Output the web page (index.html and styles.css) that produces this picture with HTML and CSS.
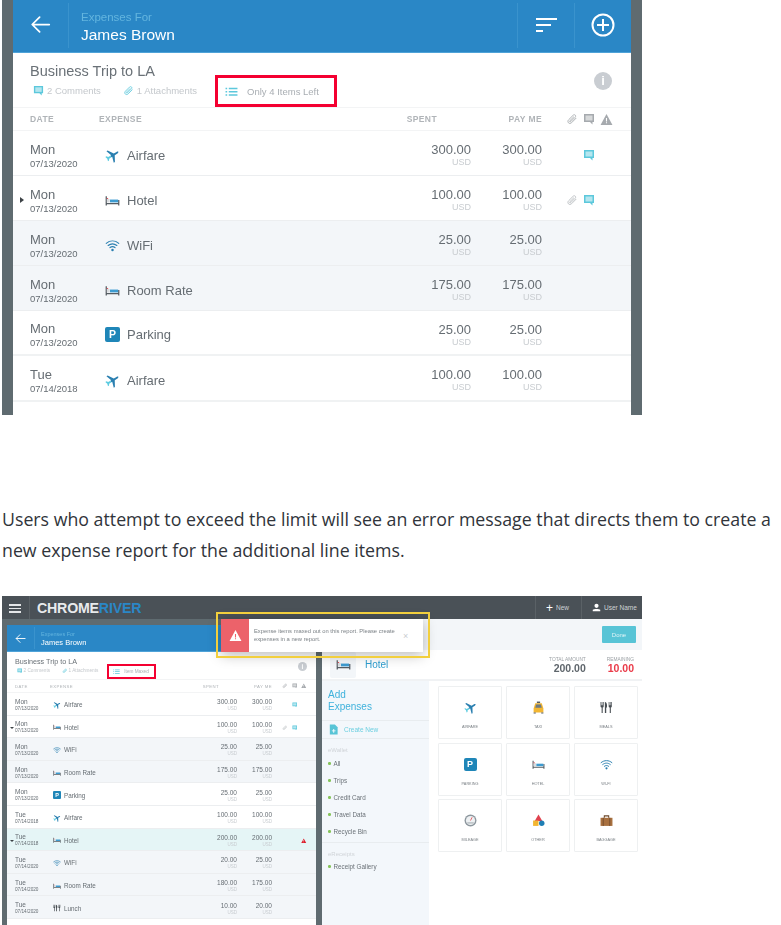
FILE: index.html
```html
<!DOCTYPE html>
<html lang="en">
<head>
  <meta charset="UTF-8">
  <title>Expense report limits</title>
  <link rel="stylesheet" href="styles.css">
</head>
<body>
  <svg class="defs" xmlns="http://www.w3.org/2000/svg">
    <symbol id="plane" viewBox="0 0 24 24">
      <g transform="rotate(58 12 12)">
        <path fill="#2a7fb0" d="M23 16.500v-2.200l-9.500-5.600V3.500C13.500 2.300 12.800 1 12 1s-1.500 1.300-1.500 2.500v5.200L1 14.300v2.200l9.500-3V15h3v-1.500z"/>
        <path fill="#5ccbe0" d="M10.500 15v4.200L8 21v2l4-1.200L16 23v-2l-2.500-1.800V15z"/>
      </g>
    </symbol>
    <symbol id="bed" viewBox="0 0 24 24">
      <path fill="#555c62" d="M1 5h2v15H1zM21 11h2v9h-2zM3 16h18v2H3z"/>
      <path fill="#3d9bd0" d="M8 10.500h13V15H8z"/>
      <path fill="#d9dde0" d="M3 9.500h4.500V15H3z"/>
      <path fill="#e0494f" d="M3 8h2v1.500H3z"/>
    </symbol>
    <symbol id="wifi" viewBox="0 0 24 24">
      <g fill="none" stroke="#2a7fb0" stroke-width="1.800" stroke-linecap="round">
        <path d="M2 8.500c6-5 14-5 20 0"/>
        <path d="M5 12c4.500-3.500 9.500-3.500 14 0"/>
        <path d="M8 15.300c2.700-2 5.300-2 8 0"/>
      </g>
      <circle cx="12" cy="19" r="2" fill="#2a7fb0"/>
    </symbol>
    <symbol id="comment" viewBox="0 0 24 24">
      <path fill="currentColor" d="M2 2h20v16h-3v5l-5-5H2z"/>
      <path fill="#fff" fill-opacity=".55" d="M5 5h14v10H5z"/>
    </symbol>
    <symbol id="clip" viewBox="0 0 24 24">
      <path fill="none" stroke="currentColor" stroke-width="1.800" stroke-linecap="round" d="M20 10.500l-8.700 8.800c-2 2-4.700 2-6.300.4s-1.600-4.300.4-6.300l8.800-8.800c1.300-1.300 3.200-1.400 4.300-.3s1 3-.3 4.300l-8.600 8.600c-.6.600-1.500.7-2 .2s-.4-1.400.2-2l7.500-7.500"/>
    </symbol>
    <symbol id="warn" viewBox="0 0 24 24">
      <path fill="currentColor" d="M12 2l11 20H1z"/>
      <path fill="#fff" d="M11 9h2v6.500h-2zM11 17h2v2h-2z"/>
    </symbol>
    <symbol id="warn-red" viewBox="0 0 24 24">
      <path fill="#fff" d="M12 2l11 20H1z"/>
      <path fill="#ec626a" d="M11 9h2v6.500h-2zM11 17h2v2h-2z"/>
    </symbol>
    <symbol id="list" viewBox="0 0 24 24">
      <path fill="currentColor" d="M1 5h3v3H1zM7 5h16v3H7zM1 11h3v3H1zM7 11h16v3H7zM1 17h3v3H1zM7 17h16v3H7z"/>
    </symbol>
    <symbol id="arrow" viewBox="0 0 24 24">
      <path fill="none" stroke="#fff" stroke-width="2" stroke-linecap="round" stroke-linejoin="round" d="M22 12H3M11 3.500L2.500 12l8.500 8.500"/>
    </symbol>
    <symbol id="cutlery" viewBox="0 0 24 24">
      <path fill="#484e53" d="M1 2h1.200v6h1V2h1.300v6h1V2h1.300v8c0 1-.7 1.700-1.800 2v10H3V12C1.800 11.700 1 11 1 10zM9 2c2.500 0 4 3 4 6.500S12 13 11.500 13v9H9zM16 2h1.200v6h1V2h1.300v6h1V2h1.300v8c0 1-.7 1.700-1.800 2v10H18V12c-1.200-.3-2-1-2-2z"/>
    </symbol>
    <symbol id="taxi" viewBox="0 0 24 24">
      <path fill="#555c62" d="M9 1h6v3H9z"/>
      <path fill="#f2b632" d="M6 4h12l3 10v7H3v-7z"/>
      <path fill="#6d7a82" d="M7.500 6.500h9l1.500 6H6z"/>
      <path fill="#555c62" d="M3 21h4v2H3zM17 21h4v2h-4z"/>
    </symbol>
    <symbol id="gauge" viewBox="0 0 24 24">
      <circle cx="12" cy="12" r="11" fill="#8d979e"/>
      <circle cx="12" cy="12" r="8.500" fill="#eef1f3"/>
      <path fill="none" stroke="#e0494f" stroke-width="1.500" d="M12 12l3-6"/>
      <path fill="none" stroke="#8d979e" stroke-width="1.500" d="M6 16.500h12"/>
    </symbol>
    <symbol id="shapes" viewBox="0 0 24 24">
      <path fill="#e0424e" d="M12 1l7 12H5z"/>
      <path fill="#f2b632" d="M2 12h10v10H2z"/>
      <circle cx="18" cy="17" r="5" fill="#1f7fb5"/>
    </symbol>
    <symbol id="bag" viewBox="0 0 24 24">
      <path fill="none" stroke="#6e4a2c" stroke-width="2" d="M8 7V3.500h8V7"/>
      <path fill="#a8703f" d="M1 7h22v15H1z"/>
      <path fill="#7d5230" d="M5 7h2v15H5zM17 7h2v15h-2z"/>
    </symbol>
    <symbol id="doc" viewBox="0 0 24 24">
      <path fill="#58c4d6" d="M4 1h11l6 6v16H4z"/>
      <path fill="#fff" d="M11.500 11h2v3h3v2h-3v3h-2v-3h-3v-2h3z"/>
    </symbol>
    <symbol id="user" viewBox="0 0 24 24">
      <circle cx="12" cy="7.500" r="5.500" fill="#fff"/>
      <path fill="#fff" d="M2 18c3-3 17-3 20 0v4H2z"/>
    </symbol>
  </svg>

  <section class="shot shot--top">
    <div class="report">
      <header class="report__bar">
        <div class="report__back"><svg class="report__arrow"><use href="#arrow"/></svg></div>
        <div class="report__who">
          <span class="report__for">Expenses For</span>
          <span class="report__name">James Brown</span>
        </div>
        <div class="report__tool">
          <span class="sort"><i class="sort__a"></i><i class="sort__b"></i><i class="sort__c"></i></span>
        </div>
        <div class="report__tool">
          <svg class="report__plus" viewBox="0 0 24 24"><circle cx="12" cy="12" r="10.500" fill="none" stroke="#fff" stroke-width="2"/><path stroke="#fff" stroke-width="2" d="M12 6v12M6 12h12"/></svg>
        </div>
      </header>

      <div class="report__info">
        <div class="report__titles">
          <h2 class="report__title">Business Trip to LA</h2>
          <div class="report__meta">
            <svg class="meta-icon"><use href="#comment"/></svg><span class="meta-text meta-text--comments">2 Comments</span>
            <svg class="meta-icon"><use href="#clip"/></svg><span class="meta-text">1 Attachments</span>
            <span class="callout"><svg class="callout__icon"><use href="#list"/></svg>Only 4 Items Left</span>
          </div>
        </div>
        <span class="info-dot">i</span>
      </div>

      <div class="row row--head">
        <div>DATE</div><div>EXPENSE</div><div class="right head-spent">SPENT</div><div class="right">PAY ME</div>
        <div class="flags"><svg class="flag flag--head"><use href="#clip"/></svg><svg class="flag flag--head"><use href="#comment"/></svg><svg class="flag flag--head flag--warn"><use href="#warn"/></svg></div>
      </div>

      <div class="row">
        <div class="when"><span class="when__day">Mon</span><span class="when__date">07/13/2020</span></div>
        <div class="what"><svg class="what__icon"><use href="#plane"/></svg>Airfare</div>
        <div class="amt"><span class="amt__val">300.00</span><span class="amt__cur">USD</span></div>
        <div class="amt"><span class="amt__val">300.00</span><span class="amt__cur">USD</span></div>
        <div class="flags flags--row"><span class="flag flag--empty"></span><svg class="flag flag--note"><use href="#comment"/></svg></div>
      </div>
      <div class="row row--open">
        <div class="when"><span class="when__day">Mon</span><span class="when__date">07/13/2020</span></div>
        <div class="what"><svg class="what__icon"><use href="#bed"/></svg>Hotel</div>
        <div class="amt"><span class="amt__val">100.00</span><span class="amt__cur">USD</span></div>
        <div class="amt"><span class="amt__val">100.00</span><span class="amt__cur">USD</span></div>
        <div class="flags flags--row"><svg class="flag flag--clip"><use href="#clip"/></svg><svg class="flag flag--note"><use href="#comment"/></svg></div>
      </div>
      <div class="row row--tint">
        <div class="when"><span class="when__day">Mon</span><span class="when__date">07/13/2020</span></div>
        <div class="what"><svg class="what__icon"><use href="#wifi"/></svg>WiFi</div>
        <div class="amt"><span class="amt__val">25.00</span><span class="amt__cur">USD</span></div>
        <div class="amt"><span class="amt__val">25.00</span><span class="amt__cur">USD</span></div>
      </div>
      <div class="row row--tint">
        <div class="when"><span class="when__day">Mon</span><span class="when__date">07/13/2020</span></div>
        <div class="what"><svg class="what__icon"><use href="#bed"/></svg>Room Rate</div>
        <div class="amt"><span class="amt__val">175.00</span><span class="amt__cur">USD</span></div>
        <div class="amt"><span class="amt__val">175.00</span><span class="amt__cur">USD</span></div>
      </div>
      <div class="row row--thick">
        <div class="when"><span class="when__day">Mon</span><span class="when__date">07/13/2020</span></div>
        <div class="what"><span class="parking">P</span>Parking</div>
        <div class="amt"><span class="amt__val">25.00</span><span class="amt__cur">USD</span></div>
        <div class="amt"><span class="amt__val">25.00</span><span class="amt__cur">USD</span></div>
      </div>
      <div class="row row--thick">
        <div class="when"><span class="when__day">Tue</span><span class="when__date">07/14/2018</span></div>
        <div class="what"><svg class="what__icon"><use href="#plane"/></svg>Airfare</div>
        <div class="amt"><span class="amt__val">100.00</span><span class="amt__cur">USD</span></div>
        <div class="amt"><span class="amt__val">100.00</span><span class="amt__cur">USD</span></div>
      </div>
    </div>
  </section>

  <p class="copy">Users who attempt to exceed the limit will see an error message that directs them to create a new expense report for the additional line items.</p>

  <section class="shot shot--app">
    <div class="topbar">
      <div class="topbar__menu"><i></i><i></i><i></i></div>
      <div class="logo">CHROME<span class="logo__river">RIVER</span></div>
      <div class="topbar__item topbar__item--new"><span class="topbar__plus">+</span>New</div>
      <div class="topbar__item topbar__item--user"><svg class="topbar__user"><use href="#user"/></svg>User Name</div>
    </div>

    <div class="app">
      <div class="report report--mini">
        <header class="report__bar">
          <div class="report__back"><svg class="report__arrow"><use href="#arrow"/></svg></div>
          <div class="report__who">
            <span class="report__for">Expenses For</span>
            <span class="report__name">James Brown</span>
          </div>
        </header>

        <div class="report__info">
          <div class="report__titles">
            <h2 class="report__title">Business Trip to LA</h2>
            <div class="report__meta">
              <svg class="meta-icon"><use href="#comment"/></svg><span class="meta-text meta-text--comments">2 Comments</span>
              <svg class="meta-icon"><use href="#clip"/></svg><span class="meta-text">1 Attachments</span>
              <span class="callout"><svg class="callout__icon"><use href="#list"/></svg>Item Maxed</span>
            </div>
          </div>
          <span class="info-dot">i</span>
        </div>

        <div class="row row--head">
          <div>DATE</div><div>EXPENSE</div><div class="right head-spent">SPENT</div><div class="right">PAY ME</div>
          <div class="flags"><svg class="flag flag--head"><use href="#clip"/></svg><svg class="flag flag--head"><use href="#comment"/></svg><svg class="flag flag--head flag--warn"><use href="#warn"/></svg></div>
        </div>

        <div class="row">
          <div class="when"><span class="when__day">Mon</span><span class="when__date">07/13/2020</span></div>
          <div class="what"><svg class="what__icon"><use href="#plane"/></svg>Airfare</div>
          <div class="amt"><span class="amt__val">300.00</span><span class="amt__cur">USD</span></div>
          <div class="amt"><span class="amt__val">300.00</span><span class="amt__cur">USD</span></div>
          <div class="flags flags--row"><span class="flag flag--empty"></span><svg class="flag flag--note"><use href="#comment"/></svg></div>
        </div>
        <div class="row row--down">
          <div class="when"><span class="when__day">Mon</span><span class="when__date">07/13/2020</span></div>
          <div class="what"><svg class="what__icon"><use href="#bed"/></svg>Hotel</div>
          <div class="amt"><span class="amt__val">100.00</span><span class="amt__cur">USD</span></div>
          <div class="amt"><span class="amt__val">100.00</span><span class="amt__cur">USD</span></div>
          <div class="flags flags--row"><svg class="flag flag--clip"><use href="#clip"/></svg><svg class="flag flag--note"><use href="#comment"/></svg></div>
        </div>
        <div class="row row--tint">
          <div class="when"><span class="when__day">Mon</span><span class="when__date">07/13/2020</span></div>
          <div class="what"><svg class="what__icon"><use href="#wifi"/></svg>WiFi</div>
          <div class="amt"><span class="amt__val">25.00</span><span class="amt__cur">USD</span></div>
          <div class="amt"><span class="amt__val">25.00</span><span class="amt__cur">USD</span></div>
        </div>
        <div class="row row--tint">
          <div class="when"><span class="when__day">Mon</span><span class="when__date">07/13/2020</span></div>
          <div class="what"><svg class="what__icon"><use href="#bed"/></svg>Room Rate</div>
          <div class="amt"><span class="amt__val">175.00</span><span class="amt__cur">USD</span></div>
          <div class="amt"><span class="amt__val">175.00</span><span class="amt__cur">USD</span></div>
        </div>
        <div class="row">
          <div class="when"><span class="when__day">Mon</span><span class="when__date">07/13/2020</span></div>
          <div class="what"><span class="parking">P</span>Parking</div>
          <div class="amt"><span class="amt__val">25.00</span><span class="amt__cur">USD</span></div>
          <div class="amt"><span class="amt__val">25.00</span><span class="amt__cur">USD</span></div>
        </div>
        <div class="row">
          <div class="when"><span class="when__day">Tue</span><span class="when__date">07/14/2018</span></div>
          <div class="what"><svg class="what__icon"><use href="#plane"/></svg>Airfare</div>
          <div class="amt"><span class="amt__val">100.00</span><span class="amt__cur">USD</span></div>
          <div class="amt"><span class="amt__val">100.00</span><span class="amt__cur">USD</span></div>
        </div>
        <div class="row row--down row--alert">
          <div class="when"><span class="when__day">Tue</span><span class="when__date">07/14/2018</span></div>
          <div class="what"><svg class="what__icon"><use href="#bed"/></svg>Hotel</div>
          <div class="amt"><span class="amt__val">200.00</span><span class="amt__cur">USD</span></div>
          <div class="amt"><span class="amt__val">200.00</span><span class="amt__cur">USD</span></div>
          <div class="flags flags--row"><span class="flag flag--empty"></span><span class="flag flag--empty"></span><svg class="flag flag--red"><use href="#warn"/></svg></div>
        </div>
        <div class="row row--tint">
          <div class="when"><span class="when__day">Tue</span><span class="when__date">07/14/2020</span></div>
          <div class="what"><svg class="what__icon"><use href="#wifi"/></svg>WiFi</div>
          <div class="amt"><span class="amt__val">20.00</span><span class="amt__cur">USD</span></div>
          <div class="amt"><span class="amt__val">25.00</span><span class="amt__cur">USD</span></div>
        </div>
        <div class="row row--tint">
          <div class="when"><span class="when__day">Tue</span><span class="when__date">07/14/2020</span></div>
          <div class="what"><svg class="what__icon"><use href="#bed"/></svg>Room Rate</div>
          <div class="amt"><span class="amt__val">180.00</span><span class="amt__cur">USD</span></div>
          <div class="amt"><span class="amt__val">175.00</span><span class="amt__cur">USD</span></div>
        </div>
        <div class="row row--tint">
          <div class="when"><span class="when__day">Tue</span><span class="when__date">07/14/2020</span></div>
          <div class="what"><svg class="what__icon"><use href="#cutlery"/></svg>Lunch</div>
          <div class="amt"><span class="amt__val">10.00</span><span class="amt__cur">USD</span></div>
          <div class="amt"><span class="amt__val">20.00</span><span class="amt__cur">USD</span></div>
        </div>
      </div>

      <div class="picker">
        <div class="picker__top"><button class="done">Done</button></div>
        <div class="picker__head">
          <span class="picker__bed"><svg class="picker__bed-icon"><use href="#bed"/></svg></span>
          <span class="picker__name">Hotel</span>
          <div class="sum"><span class="sum__label">TOTAL AMOUNT</span><span class="sum__val">200.00</span></div>
          <div class="sum sum--left"><span class="sum__label">REMAINING</span><span class="sum__val">10.00</span></div>
        </div>
        <div class="picker__body">
          <nav class="side">
            <h3 class="side__title">Add<br>Expenses</h3>
            <div class="side__new"><svg class="side__doc"><use href="#doc"/></svg>Create New</div>
            <div class="side__group">
              <h4 class="side__label">eWallet</h4>
              <ul class="side__list">
                <li>All</li><li>Trips</li><li>Credit Card</li><li>Travel Data</li><li>Recycle Bin</li>
              </ul>
            </div>
            <div class="side__group side__group--last">
              <h4 class="side__label">eReceipts</h4>
              <ul class="side__list"><li>Receipt Gallery</li></ul>
            </div>
          </nav>
          <div class="tiles">
            <div class="tile"><svg class="tile__icon"><use href="#plane"/></svg><span class="tile__label">Airfare</span></div>
            <div class="tile"><svg class="tile__icon"><use href="#taxi"/></svg><span class="tile__label">Taxi</span></div>
            <div class="tile"><svg class="tile__icon"><use href="#cutlery"/></svg><span class="tile__label">Meals</span></div>
            <div class="tile"><span class="parking parking--big">P</span><span class="tile__label">Parking</span></div>
            <div class="tile"><svg class="tile__icon"><use href="#bed"/></svg><span class="tile__label">Hotel</span></div>
            <div class="tile"><svg class="tile__icon"><use href="#wifi"/></svg><span class="tile__label">Wi-Fi</span></div>
            <div class="tile"><svg class="tile__icon"><use href="#gauge"/></svg><span class="tile__label">Mileage</span></div>
            <div class="tile"><svg class="tile__icon"><use href="#shapes"/></svg><span class="tile__label">Other</span></div>
            <div class="tile"><svg class="tile__icon"><use href="#bag"/></svg><span class="tile__label">Baggage</span></div>
          </div>
        </div>
      </div>
    </div>

    <div class="toast">
      <span class="toast__mark"><svg class="toast__warn"><use href="#warn-red"/></svg></span>
      <p class="toast__text">Expense items maxed out on this report. Please create expenses in a new report.</p>
      <span class="toast__close">&times;</span>
    </div>
    <div class="toast-ring"></div>
  </section>
</body>
</html>
```

FILE: styles.css
```css
html {
  box-sizing: border-box;
  background: #fff;
}

*, *:before, *:after {
  box-sizing: inherit;
}

body {
  margin: 0;
  font-family: 'Liberation Sans', Arial, sans-serif;
  color: #666d73;
}

h2, h3, h4, p, ul {
  margin: 0;
  padding: 0;
  font-weight: normal;
}

.defs {
  display: none;
}

.shot {
  width: 640px;
  margin-left: 2px;
  background: #5f6b70;
}

/* Top screenshot */
.shot--top {
  height: 415px;
  padding: 0 11px;
  overflow: hidden;
}

.report {
  background: #fff;
  height: 100%;
  filter: blur(0.3px);
}

.report__bar {
  display: flex;
  height: 53px;
  background: #2a87c6;
  border-bottom: 1px solid #4fa3d8;
}

.report__back {
  width: 56px;
  margin: 3px 0 4px;
  display: flex;
  align-items: center;
  justify-content: center;
  border-right: 1px solid #3a93cd;
}

.report__arrow {
  width: 21px;
  height: 21px;
  margin-top: -2px;
}

.report__who {
  flex: 1;
  display: flex;
  flex-direction: column;
  padding: 10px 0 0 12px;
}

.report__for {
  font-size: 11.5px;
  line-height: 15px;
  color: #63b5df;
}

.report__name {
  font-size: 15.5px;
  line-height: 19px;
  color: #fff;
}

.report__tool {
  width: 57px;
  margin: 3px 0 4px;
  display: flex;
  align-items: center;
  justify-content: center;
  border-left: 1px solid #3a93cd;
}

.sort {
  display: flex;
  flex-direction: column;
  gap: 4px;
  width: 21px;
  margin-top: -2px;
}

.sort i {
  display: block;
  height: 2px;
  background: #fff;
}

.sort__b { width: 15px; }
.sort__c { width: 7px; }

.report__plus {
  width: 24px;
  height: 24px;
  margin-top: -2px;
}

.report__info {
  display: flex;
  align-items: center;
  height: 55px;
  padding: 2px 19px 0 17px;
  border-bottom: 1px solid #f3f4f5;
}

.report__titles {
  flex: 1;
}

.report__title {
  font-size: 14.5px;
  line-height: 18px;
  color: #6a7177;
  margin-top: -2px;
}

.report__meta {
  display: flex;
  align-items: center;
  height: 16px;
  margin-top: 2px;
  font-size: 9.5px;
  color: #c4c8cc;
}

.meta-icon {
  width: 11px;
  height: 11px;
  margin: 0 3px 0 3px;
  color: #5cc8dc;
}

.meta-text--comments {
  margin-right: 19px;
}

.callout {
  display: flex;
  align-items: center;
  flex: none;
  width: 122px;
  height: 32px;
  margin: 2px 0 0 18px;
  padding-left: 7px;
  border: 3px solid #f40031;
  color: #a9aeb3;
}

.callout__icon {
  width: 13px;
  height: 13px;
  margin-right: 9px;
  color: #5cc8dc;
}

.info-dot {
  width: 18px;
  height: 18px;
  border-radius: 50%;
  background: #c9cdd2;
  color: #fff;
  font: bold 13px/18px 'Liberation Sans', Arial, sans-serif;
  text-align: center;
}

.row {
  position: relative;
  display: grid;
  grid-template-columns: 75px 1fr 80px 71px 89px;
  align-items: center;
  height: 45.1px;
  padding: 4px 0 0 17px;
  border-bottom: 1px solid #eceef0;
}

.row--head {
  grid-template-columns: 69px 1fr 80px 71px 89px;
  height: 23px;
  padding-top: 0;
  font-size: 8.5px;
  font-weight: bold;
  letter-spacing: .4px;
  color: #b0b4b8;
  border-bottom-color: #f3f4f5;
}

.row--tint {
  background: #f3f6f9;
}

.row--thick {
  border-bottom: 2px solid #f0f2f3;
}

.row--open:before {
  content: '';
  position: absolute;
  left: 7px;
  top: 21px;
  border-left: 4px solid #3d4246;
  border-top: 3px solid transparent;
  border-bottom: 3px solid transparent;
}

.right {
  text-align: right;
}

.head-spent {
  padding-right: 34px;
}

.when {
  display: flex;
  flex-direction: column;
  padding-top: 1px;
}

.when__day {
  font-size: 13px;
  line-height: 15px;
}

.when__date {
  font-size: 9.5px;
  line-height: 13px;
}

.what {
  display: flex;
  align-items: center;
  font-size: 13px;
}

.what__icon {
  width: 15px;
  height: 15px;
  margin-right: 7px;
}

.parking {
  display: inline-block;
  flex: none;
  width: 15px;
  height: 15px;
  margin-right: 7px;
  border-radius: 2px;
  background: #1f86b8;
  color: #fff;
  font: bold 10.5px/15px 'Liberation Sans', Arial, sans-serif;
  text-align: center;
}

.amt {
  display: flex;
  flex-direction: column;
  align-items: flex-end;
}

.amt__val {
  font-size: 13px;
  line-height: 15px;
}

.amt__cur {
  font-size: 9px;
  line-height: 11px;
  color: #c8ccd0;
}

.flags {
  display: flex;
  align-items: center;
  gap: 5px;
  padding-left: 24px;
}

.flag {
  width: 12px;
  height: 12px;
  flex: none;
}

.flag--warn {
  width: 13px;
  height: 13px;
}

.flag--head { color: #a6aaae; }
.flag--clip { color: #b8bcc0; }
.flag--note { color: #5cc8dc; }
.flag--red { color: #dc1f2c; }

.copy {
  width: 781px;
  margin: 89px 0 0;
  padding-left: 2px;
  font: 17.75px/31px 'Open Sans', 'Noto Sans', sans-serif;
  color: #30343a;
}

/* Second screenshot */
.shot--app {
  position: relative;
  height: 329px;
  margin-top: 30px;
  overflow: hidden;
}

.topbar {
  display: flex;
  align-items: center;
  height: 23px;
  background: #4a5157;
  color: #cfd3d6;
}

.topbar__menu {
  display: flex;
  flex-direction: column;
  gap: 2px;
  width: 28px;
  height: 100%;
  margin-left: 0;
  padding: 8px 8px 0 7px;
  border-right: 1px solid #5a6166;
}

.topbar__menu i {
  display: block;
  height: 1.500px;
  background: #e4e6e8;
}

.logo {
  flex: 1;
  padding-left: 7px;
  font-size: 14.2px;
  font-weight: bold;
  letter-spacing: -.2px;
  color: #e8eaec;
}

.logo__river {
  color: #2a87c6;
}

.topbar__item {
  display: flex;
  align-items: center;
  height: 100%;
  font-size: 6.5px;
  border-left: 1px solid #5a6166;
}

.topbar__item--new {
  width: 46px;
  padding-left: 10px;
}

.topbar__item--user {
  width: 61px;
  padding-left: 10px;
}

.topbar__plus {
  margin-right: 3px;
  font-size: 12px;
  color: #fff;
}

.topbar__user {
  width: 9px;
  height: 9px;
  margin-right: 3px;
}

.app {
  display: flex;
  height: 306px;
  padding: 6px 0 0 5px;
}

.report--mini {
  width: 309px;
  flex: none;
  height: 300px;
  filter: blur(0.5px);
}

.report--mini .report__bar {
  height: 27px;
}

.report--mini .report__back {
  width: 28px;
  margin: 2px 0;
}

.report--mini .report__arrow {
  width: 11px;
  height: 11px;
  margin-top: 0;
}

.report--mini .report__who {
  padding: 6px 0 0 6px;
}

.report--mini .report__for {
  font-size: 5.5px;
  line-height: 7px;
}

.report--mini .report__name {
  font-size: 7.500px;
  line-height: 10px;
}

.report--mini .report__info {
  height: 28px;
  padding: 1px 9px 0 8px;
}

.report--mini .report__title {
  font-size: 7.200px;
  line-height: 9px;
  margin-top: -1px;
}

.report--mini .report__meta {
  height: 8px;
  margin-top: 1px;
  font-size: 4.7px;
}

.report--mini .meta-icon {
  width: 5.500px;
  height: 5.500px;
  margin: 0 1.500px;
}

.report--mini .meta-text--comments {
  margin-right: 10px;
}

.report--mini .callout {
  width: 49px;
  height: 15px;
  margin: 1px 0 0 9px;
  padding-left: 4px;
  border-width: 2px;
}

.report--mini .callout__icon {
  width: 7px;
  height: 7px;
  margin-right: 4px;
}

.report--mini .info-dot {
  width: 9px;
  height: 9px;
  font-size: 6.5px;
  line-height: 9px;
}

.report--mini .row {
  grid-template-columns: 38px 1fr 50px 35px 44px;
  height: 22.6px;
  padding: 2px 0 0 8px;
}

.report--mini .row--head {
  grid-template-columns: 35px 1fr 50px 35px 44px;
  height: 13px;
  padding-top: 0;
  font-size: 4.3px;
  font-weight: normal;
}

.report--mini .head-spent {
  padding-right: 18px;
}

.report--mini .when {
  padding-top: 0;
}

.report--mini .when__day {
  font-size: 6.5px;
  line-height: 8px;
}

.report--mini .when__date {
  font-size: 4.7px;
  line-height: 6px;
}

.report--mini .what {
  font-size: 6.300px;
}

.report--mini .what__icon,
.report--mini .parking {
  width: 8px;
  height: 8px;
  margin-right: 3px;
}

.report--mini .parking {
  font-size: 5.5px;
  line-height: 8px;
  border-radius: 1px;
}

.report--mini .amt__val {
  font-size: 6.5px;
  line-height: 8px;
}

.report--mini .amt__cur {
  font-size: 4.5px;
  line-height: 5px;
}

.report--mini .flags {
  gap: 4px;
  padding-left: 10px;
}

.report--mini .flag {
  width: 5.500px;
  height: 5.500px;
}

.row--alert {
  background: #e5f5f6;
}

.row--down:before {
  content: '';
  position: absolute;
  left: 2.500px;
  top: 11px;
  border-top: 2px solid #3d4246;
  border-left: 2px solid transparent;
  border-right: 2px solid transparent;
}

.picker {
  flex: 1;
  margin-left: 6px;
  margin-top: -6px;
  background: #fff;
  filter: blur(0.4px);
}

.picker__top {
  display: flex;
  justify-content: flex-end;
  height: 31px;
  padding: 7px 6px 0 0;
  background: #f3f6f9;
}

.done {
  width: 34px;
  height: 17px;
  border: 0;
  border-radius: 1px;
  background: #58c4d6;
  color: #dff4f7;
  font: 6px 'Liberation Sans', Arial, sans-serif;
}

.picker__head {
  display: flex;
  align-items: center;
  height: 31px;
  padding: 0 8px;
  border-bottom: 2px solid #f0f2f4;
}

.picker__bed {
  display: flex;
  align-items: center;
  justify-content: center;
  width: 26px;
  height: 26px;
  border-radius: 2px;
  background: #f3f6f9;
}

.picker__bed-icon {
  width: 15px;
  height: 15px;
}

.picker__name {
  flex: 1;
  margin-left: 9px;
  font-size: 10px;
  color: #2f9fd0;
}

.sum {
  display: flex;
  flex-direction: column;
  align-items: flex-end;
}

.sum--left {
  margin-left: 21px;
}

.sum__label {
  font-size: 4.8px;
  line-height: 7px;
  color: #9da2a6;
}

.sum__val {
  font-size: 10.5px;
  font-weight: bold;
  line-height: 11px;
  color: #5f666c;
}

.sum--left .sum__val {
  color: #ea3b49;
}

.picker__body {
  display: flex;
  height: 244px;
}

.side {
  width: 107px;
  background: #f3f7fb;
}

.side__title {
  height: 40px;
  padding: 8px 0 0 6px;
  font-size: 10px;
  line-height: 12px;
  color: #3fb2dc;
  border-bottom: 1px solid #e8ecef;
}

.side__new {
  display: flex;
  align-items: center;
  height: 18px;
  padding-left: 6px;
  font-size: 6.5px;
  color: #6ccfe0;
  border-bottom: 1px solid #e8ecef;
}

.side__doc {
  width: 11px;
  height: 11px;
  margin-right: 5px;
}

.side__group {
  padding: 6px 0 0 6px;
  height: 104px;
  border-bottom: 1px solid #e8ecef;
}

.side__group--last {
  height: auto;
  border-bottom: 0;
}

.side__label {
  font-size: 6px;
  line-height: 10px;
  color: #d0d4d8;
}

.side__list {
  list-style: none;
  font-size: 6.3px;
  color: #6a7177;
}

.side__list li {
  display: flex;
  align-items: center;
  height: 17px;
}

.side__group--last .side__list li {
  height: 15px;
}

.side__list li:before {
  content: '';
  width: 2.500px;
  height: 2.500px;
  margin-right: 3px;
  border-radius: 50%;
  background: #86c45a;
}

.tiles {
  display: grid;
  grid-template-columns: repeat(3, 64px);
  grid-auto-rows: 53px;
  gap: 3.5px 4px;
  align-content: start;
  padding: 5px 0 0 9px;
}

.tile {
  display: flex;
  flex-direction: column;
  align-items: center;
  padding-top: 14px;
  border: 1px solid #eef0f1;
  border-radius: 1px;
  background: #fff;
}

.tile__icon {
  width: 13px;
  height: 13px;
}

.parking--big {
  width: 13px;
  height: 13px;
  margin: 0;
  font-size: 9px;
  line-height: 13px;
}

.tile__label {
  margin-top: 10px;
  font-size: 3.8px;
  line-height: 6px;
  text-transform: uppercase;
  color: #7b8186;
}

.toast {
  position: absolute;
  left: 219px;
  top: 23px;
  display: flex;
  align-items: center;
  width: 202px;
  height: 33px;
  background: #fff;
  box-shadow: 0 3px 14px rgba(0,0,0,0.28);
}

.toast__mark {
  display: flex;
  align-items: center;
  justify-content: center;
  width: 28px;
  height: 100%;
  flex: none;
  background: #ec626a;
}

.toast__warn {
  width: 13px;
  height: 13px;
}

.toast__text {
  flex: 1;
  padding-left: 5px;
  font-size: 5.8px;
  line-height: 7.500px;
  color: #7b8186;
  filter: blur(0.2px);
}

.toast__close {
  width: 20px;
  font-size: 9px;
  color: #c9ccd0;
}

.toast-ring {
  position: absolute;
  left: 214px;
  top: 16px;
  width: 214px;
  height: 46px;
  border: 2px solid #f2cf3d;
}
```
